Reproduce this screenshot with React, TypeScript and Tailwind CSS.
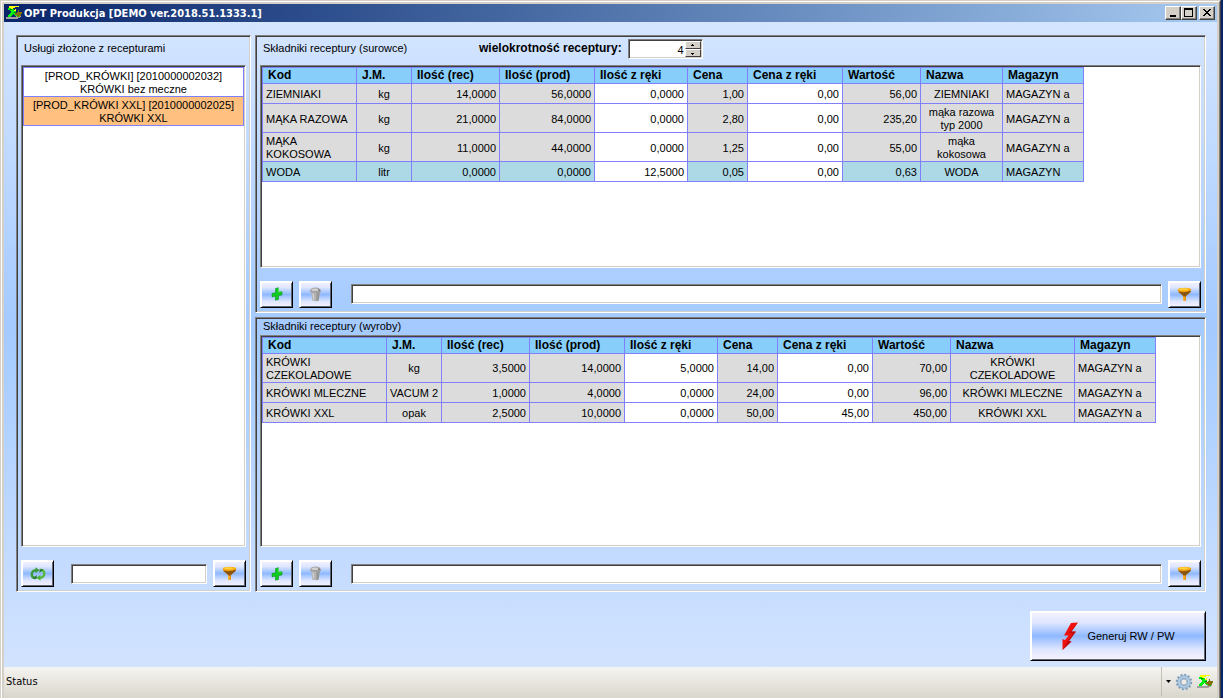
import React from "react";

const SUNKEN =
  "border border-t-[#808080] border-l-[#808080] border-b-white border-r-white shadow-[inset_1px_1px_0_#404040,inset_-1px_-1px_0_#d4d0c8]";
const RAISED =
  "border border-t-white border-l-white border-b-black border-r-black shadow-[inset_1px_1px_0_#ffffff,inset_-1px_-1px_0_#606878] bg-[linear-gradient(#f4f2ff_0%,#dfe6ff_22%,#8fb9ff_50%,#dfe6ff_78%,#f6f3ff_100%)]";
const CAPTION =
  "flex h-[14px] w-4 items-center justify-center border border-t-white border-l-white border-b-[#404040] border-r-[#404040] bg-[#d4d0c8] shadow-[inset_-1px_-1px_0_#808080]";
const SPIN =
  "flex flex-1 items-center justify-center border border-t-white border-l-white border-b-[#404040] border-r-[#404040] bg-[#d4d0c8]";

function AppLogo() {
  return (
    <svg width="16" height="16" viewBox="0 0 16 16" aria-hidden="true" shapeRendering="crispEdges">
      <path d="M0 12h2v-1h3v1h5v-1h5v1h-1v1h-2v1H0z" fill="#a0a0a0" />
      <path d="M3 1h8v1H9v1H7v1H5V3H3zM11 1h2v1h-2zM9 4h1v2H8V5h1z" fill="#ffff00" />
      <path d="M2 3h3v1h3v2h2v2h1v1h2v1h1v2h-3v-1H9v-1H8V9H7v1H6v1H5v1H2v-2h1V9h1V8h1V6H4V5H2z" fill="#00f010" />
      <path d="M12 5h1v2h3v2h-1v2h-2v1h-2v-2H9V8h2V7h1z" fill="#807008" />
      <path d="M8 7h2v1H8zM4 4h2v1H4z" fill="#008000" />
    </svg>
  );
}

function FunnelIcon() {
  return (
    <svg width="15" height="15" viewBox="0 0 15 15" aria-hidden="true">
      <path d="M.8 2.500 1.500 5 6 8.800V13.500L9 14V8.800L13.500 5 14.200 2.500Z" fill="#e8950c" />
      <path d="M1.500 4.500Q7.500 6.500 14 3.500L13.400 5.200 9 9V9.500H6V8.800L1.500 5Z" fill="#8a5412" />
      <ellipse cx="7.500" cy="2.500" rx="6.700" ry="1.800" fill="#f8ae10" />
      <ellipse cx="6.500" cy="2.200" rx="4.500" ry="1" fill="#ffd040" />
      <path d="M6.800 9.500V13.600" stroke="#ffc040" strokeWidth="1" />
    </svg>
  );
}

function PlusIcon() {
  return (
    <svg width="12" height="14" viewBox="0 0 12 14" aria-hidden="true">
      <path d="M4.500 1.500 7.500.8V5L11 4.600V8L7.500 8.600V12.500L4.500 13.200V9.200L1 9.800V6.500L4.500 5.800Z" fill="#10cc20" stroke="#089018" strokeWidth="0.600" />
      <path d="M7.500 1V5L11 4.700" stroke="#70e870" strokeWidth="0.700" fill="none" />
    </svg>
  );
}

function BinIcon() {
  return (
    <svg width="13" height="15" viewBox="0 0 13 15" aria-hidden="true">
      <path d="M2 4 3.200 13.500Q6.500 15 9.800 13.500L11 4Z" fill="#b4b4b4" />
      <path d="M7.500 5 10.800 4.500 9.600 13.500 7.500 14.200Z" fill="#959595" />
      <path d="M4 6.500 4.600 12.500" stroke="#d8d8d8" strokeWidth="1" />
      <path d="M1 3.500Q2 .6 6.500.6T12 3.500V5Q6.500 6.400 1 5Z" fill="#a2a2a2" />
      <ellipse cx="6" cy="2.700" rx="3.600" ry="1.200" fill="#d2d2d2" />
      <path d="M9 2.500 11 4" stroke="#6f6f6f" strokeWidth="1" />
    </svg>
  );
}

function RefreshIcon() {
  return (
    <svg width="16" height="14" viewBox="0 0 16 14" aria-hidden="true">
      <g fill="none" strokeWidth="2.400">
        <path d="M5.500 11.200Q1.500 10.500 1.800 7T6 3.200" stroke="#3a9a38" />
        <path d="M10.500 2.800Q14.500 3.500 14.200 7T10 10.800" stroke="#55b83a" />
      </g>
      <path d="M5.500.3 9.500 3.200 5.500 6.200Z" fill="#3a9a38" />
      <path d="M10.500 7.800 6.500 10.800 10.500 13.700Z" fill="#4cb032" />
      <path d="M2.500 11.800H6.800V8ZM13.500 2.200H9.500V6Z" fill="#237a2c" />
    </svg>
  );
}

function BoltIcon() {
  return (
    <svg width="18" height="30" viewBox="0 0 18 30" aria-hidden="true">
      <path d="M10 2 17 1.500 10.500 10.500 15 10.500 8 20 10.500 20.500 1.500 29 1.500 18 4 19 7.500 14.500 3 14.500Z" fill="#f01010" />
      <path d="M17 1.500 10.500 10.500 15 10.500 8 20 10.500 20.500 1.500 29 7 19.500 12 12.200 7.800 12Z" fill="#a80808" opacity=".7" />
    </svg>
  );
}

function GearIcon() {
  return (
    <svg width="18" height="18" viewBox="0 0 18 18" aria-hidden="true">
      <circle cx="9" cy="9" r="7.200" fill="none" stroke="#7a9cbc" strokeWidth="2" strokeDasharray="2 1.770" />
      <circle cx="9" cy="9" r="5" fill="none" stroke="#8fafcc" strokeWidth="3.600" />
      <circle cx="9" cy="9" r="5" fill="none" stroke="#b8d0e6" strokeWidth="1.600" />
      <circle cx="9" cy="9" r="3" fill="#eceae4" stroke="#7f9fbc" strokeWidth=".7" />
    </svg>
  );
}

function ToolButton({ label, children }: { label: string; children: React.ReactNode }) {
  return (
    <button type="button" aria-label={label} className={`flex h-[27px] w-[33px] shrink-0 items-center justify-center ${RAISED}`}>
      {children}
    </button>
  );
}

const HEADERS = ["Kod", "J.M.", "Ilość (rec)", "Ilość (prod)", "Ilość z ręki", "Cena", "Cena z ręki", "Wartość", "Nazwa", "Magazyn"];

const MATERIALS = [
  ["ZIEMNIAKI", "kg", "14,0000", "56,0000", "0,0000", "1,00", "0,00", "56,00", "ZIEMNIAKI", "MAGAZYN a"],
  ["MĄKA RAZOWA", "kg", "21,0000", "84,0000", "0,0000", "2,80", "0,00", "235,20", "mąka razowa typ 2000", "MAGAZYN a"],
  ["MĄKA KOKOSOWA", "kg", "11,0000", "44,0000", "0,0000", "1,25", "0,00", "55,00", "mąka kokosowa", "MAGAZYN a"],
  ["WODA", "litr", "0,0000", "0,0000", "12,5000", "0,05", "0,00", "0,63", "WODA", "MAGAZYN"],
];

const PRODUCTS = [
  ["KRÓWKI CZEKOLADOWE", "kg", "3,5000", "14,0000", "5,0000", "14,00", "0,00", "70,00", "KRÓWKI CZEKOLADOWE", "MAGAZYN a"],
  ["KRÓWKI MLECZNE", "VACUM 2", "1,0000", "4,0000", "0,0000", "24,00", "0,00", "96,00", "KRÓWKI MLECZNE", "MAGAZYN a"],
  ["KRÓWKI XXL", "opak", "2,5000", "10,0000", "0,0000", "50,00", "45,00", "450,00", "KRÓWKI XXL", "MAGAZYN a"],
];

const ALIGN = [
  "px-[3px] text-left",
  "text-center whitespace-nowrap",
  "px-[3px] text-right",
  "px-[3px] text-right",
  "px-[3px] text-right",
  "px-[3px] text-right",
  "px-[3px] text-right",
  "px-[3px] text-right",
  "px-[3px] text-center",
  "px-[3px] text-left",
];

function RecipeTable({ label, rows, wide, selected }: { label: string; rows: string[][]; wide?: boolean; selected?: number }) {
  return (
    <table aria-label={label} className="w-max table-fixed border-separate border-spacing-0 border-t border-l border-[#8080ff]">
      <colgroup>
        <col className={wide ? "w-[124px]" : "w-[94px]"} />
        <col className="w-[55px]" />
        <col className="w-[88px]" />
        <col className="w-[95px]" />
        <col className="w-[93px]" />
        <col className="w-[60px]" />
        <col className="w-[95px]" />
        <col className="w-[78px]" />
        <col className={wide ? "w-[124px]" : "w-[82px]"} />
        <col className="w-[81px]" />
      </colgroup>
      <thead>
        <tr className="h-4">
          {HEADERS.map((h) => (
            <th key={h} scope="col" className="overflow-hidden border-r border-b border-[#8080ff] bg-[#87cefa] p-0 pl-[5px] text-left text-[12px] leading-[15px] font-bold whitespace-nowrap">
              {h}
            </th>
          ))}
        </tr>
      </thead>
      <tbody>
        {rows.map((row, r) => (
          <tr key={row[0]} className="h-5">
            {row.map((cell, c) => {
              const editable = c === 4 || c === 6;
              const fill = editable ? "bg-white" : r === selected ? "bg-[#add8e6]" : "bg-[#dcdcdc]";
              return (
                <td key={c} className={`border-r border-b border-[#8080ff] pt-0.5 leading-[13px] ${ALIGN[c]} ${fill}`}>
                  {cell}
                </td>
              );
            })}
          </tr>
        ))}
      </tbody>
    </table>
  );
}

function PanelToolbar({ label }: { label: string }) {
  return (
    <div className="flex shrink-0 items-center pt-[13px] pb-[3px]">
      <ToolButton label="Dodaj"><PlusIcon /></ToolButton>
      <div className="w-1.5" />
      <ToolButton label="Usuń"><BinIcon /></ToolButton>
      <input type="text" aria-label={label} className={`mr-1.5 ml-[19px] h-5 min-w-0 flex-1 bg-white px-1 outline-none ${SUNKEN}`} />
      <ToolButton label="Filtruj"><FunnelIcon /></ToolButton>
    </div>
  );
}

export default function App() {
  const [multiple, setMultiple] = React.useState(4);
  const [active, setActive] = React.useState(1);
  const services = [
    ["[PROD_KRÓWKI] [2010000002032]", "KRÓWKI bez meczne"],
    ["[PROD_KRÓWKI XXL] [2010000002025]", "KRÓWKI XXL"],
  ];

  return (
    <div className="flex h-screen min-h-[560px] bg-[#0a246a] pr-[2px] font-['Liberation_Sans',Arial,sans-serif] text-[11px] leading-[13px] text-black">
      <div className="flex min-w-0 flex-1 flex-col border-t border-l border-r border-[#d4d0c8] border-r-[#404040] bg-[#d4d0c8]">
        <div className="flex min-h-0 flex-1 flex-col border-t border-l border-white border-r border-r-[#808080] pt-0.5 pr-0.5 pl-0.5">
          <header className="flex h-[18px] shrink-0 items-center bg-linear-to-r from-[#0a246a] to-[#a6caf0] pr-0.5 pl-0.5">
            <AppLogo />
            <h1 className="ml-0.5 flex-1 font-['DejaVu_Sans_Condensed','DejaVu_Sans',sans-serif] text-[11px] font-bold whitespace-nowrap text-white">
              OPT Produkcja [DEMO ver.2018.51.1333.1]
            </h1>
            <button type="button" aria-label="Minimalizuj" className={CAPTION}>
              <svg width="10" height="10" viewBox="0 0 10 10" shapeRendering="crispEdges"><path d="M2 7h6v2H2z" /></svg>
            </button>
            <button type="button" aria-label="Maksymalizuj" className={CAPTION}>
              <svg width="10" height="10" viewBox="0 0 10 10" shapeRendering="crispEdges"><path d="M0 0h9v9H0zM1 2v6h7V2z" fillRule="evenodd" /></svg>
            </button>
            <button type="button" aria-label="Zamknij" className={`ml-0.5 ${CAPTION}`}>
              <svg width="10" height="10" viewBox="0 0 10 10" shapeRendering="crispEdges"><path d="M1 1h2v1h1v1h2V2h1V1h2v1H8v1H7v1H6v1h1v1h1v1h1v1H7V7H6V6H4v1H3v1H1V7h1V6h1V5h1V4H3V3H2V2H1z" /></svg>
            </button>
          </header>

          <main className="flex min-h-0 flex-1 flex-col bg-[linear-gradient(#d4e5ff_0%,#a4caff_47%,#a8cdff_53%,#d2e3ff_100%)] pt-[13px] pr-[11px] pl-3">
            <div className="flex min-h-0 flex-1 gap-1">
              <section className={`flex w-[235px] shrink-0 flex-col px-1 pt-[5px] pb-px ${SUNKEN}`}>
                <h2 className="h-6 pt-px pl-[3px]">Usługi złożone z recepturami</h2>
                <ul className={`min-h-0 flex-1 bg-white p-px ${SUNKEN}`}>
                  {services.map(([code, name], i) => (
                    <li key={code}>
                      <button
                        type="button"
                        onClick={() => setActive(i)}
                        className={`block w-full border-x border-b border-[#8080ff] pt-0.5 text-center leading-[13px] ${i === 0 ? "border-t" : ""} ${i === active ? "bg-[#ffc080]" : "bg-white"}`}
                      >
                        {code}
                        <br />
                        {name}
                      </button>
                    </li>
                  ))}
                </ul>
                <div className="flex shrink-0 items-center pt-[13px] pb-[3px]">
                  <ToolButton label="Odśwież"><RefreshIcon /></ToolButton>
                  <input type="text" aria-label="Szukaj usługi" className={`mr-1.5 ml-[17px] h-5 min-w-0 flex-1 bg-white px-1 outline-none ${SUNKEN}`} />
                  <ToolButton label="Filtruj usługi"><FunnelIcon /></ToolButton>
                </div>
              </section>

              <div className="flex min-w-0 flex-1 flex-col gap-1">
                <section className={`flex min-h-0 flex-1 flex-col px-1 pt-[3px] pb-px ${SUNKEN}`}>
                  <div className="flex h-[26px] shrink-0 items-start pl-[3px]">
                    <h2 className="w-[216px] pt-[3px]">Składniki receptury (surowce)</h2>
                    <label htmlFor="multiple" className="pt-[3px] text-[12px] font-bold">wielokrotność receptury:</label>
                    <div className={`ml-1.5 flex h-5 w-[75px] bg-white p-px ${SUNKEN}`}>
                      <input
                        id="multiple"
                        type="number"
                        value={multiple}
                        onChange={(e) => setMultiple(Number(e.target.value))}
                        className="min-w-0 flex-1 appearance-none bg-transparent pt-0.5 pr-px text-right outline-none [-moz-appearance:textfield] [&::-webkit-inner-spin-button]:appearance-none"
                      />
                      <div className="flex w-4 flex-col">
                        <button type="button" aria-label="Zwiększ" onClick={() => setMultiple(multiple + 1)} className={SPIN}>
                          <svg width="5" height="3" viewBox="0 0 5 3" shapeRendering="crispEdges"><path d="M2 0h1v1h1v1H1V1h1z" /></svg>
                        </button>
                        <button type="button" aria-label="Zmniejsz" onClick={() => setMultiple(multiple - 1)} className={SPIN}>
                          <svg width="5" height="3" viewBox="0 0 5 3" shapeRendering="crispEdges"><path d="M1 1h3v1H3v1H2V2H1z" /></svg>
                        </button>
                      </div>
                    </div>
                  </div>
                  <div className={`min-h-0 flex-1 overflow-auto bg-white p-px ${SUNKEN}`}>
                    <RecipeTable label="Surowce" rows={MATERIALS} selected={3} />
                  </div>
                  <PanelToolbar label="Szukaj surowca" />
                </section>

                <section className={`flex min-h-0 flex-1 flex-col px-1 pt-px pb-px ${SUNKEN}`}>
                  <h2 className="h-4 shrink-0 pt-px pl-[3px]">Składniki receptury (wyroby)</h2>
                  <div className={`min-h-0 flex-1 overflow-auto bg-white p-px ${SUNKEN}`}>
                    <RecipeTable label="Wyroby" rows={PRODUCTS} wide />
                  </div>
                  <PanelToolbar label="Szukaj wyrobu" />
                </section>
              </div>
            </div>

            <div className="flex shrink-0 justify-end pt-[19px] pb-[6px]">
              <button type="button" className={`flex h-[50px] w-44 items-center justify-center gap-2 ${RAISED}`}>
                <BoltIcon />
                <span>Generuj RW / PW</span>
              </button>
            </div>
          </main>

          <footer className="flex h-[31px] shrink-0 items-center bg-linear-to-b from-[#f5f4f1] to-[#d9d6cc] pb-0.5 pl-0.5 font-['DejaVu_Sans_Condensed','DejaVu_Sans',sans-serif]">
            <span className="flex-1">Status</span>
            <div className="flex h-full items-center border-l border-[#c4c0b4] pr-1 pl-1">
              <button type="button" aria-label="Opcje" className="flex items-center gap-1">
                <svg width="5" height="3" viewBox="0 0 5 3"><path d="M0 0 2.500 3 5 0z" /></svg>
                <GearIcon />
              </button>
              <span className="ml-1"><AppLogo /></span>
            </div>
          </footer>
        </div>
      </div>
    </div>
  );
}
